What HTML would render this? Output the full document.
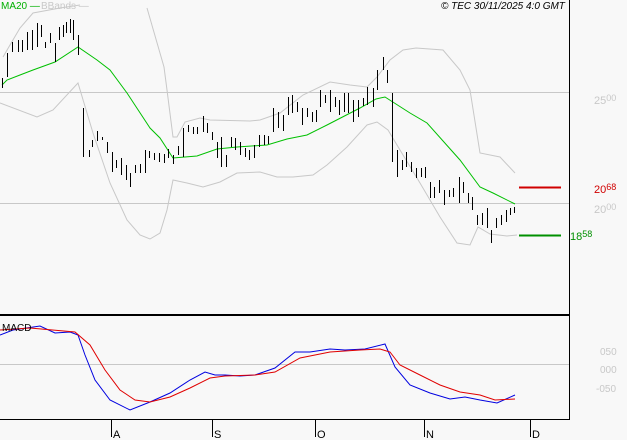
<!DOCTYPE html><html><head><style>body{margin:0;background:#f8f8f8;width:627px;height:440px;overflow:hidden;font-family:"Liberation Sans",sans-serif}</style></head><body>
<svg width="627" height="440" xmlns="http://www.w3.org/2000/svg" style="position:absolute;left:0;top:0">
<rect width="627" height="440" fill="#f8f8f8"/>
<g stroke="#c8c8c8" stroke-width="1" fill="none">
<line x1="0" y1="92.5" x2="569" y2="92.5"/><line x1="0" y1="203.5" x2="569" y2="203.5"/><line x1="0" y1="364.5" x2="569" y2="364.5"/>
<polyline points="3,57 10,45 20,28 33,13 60,8 80,5"/>
<polyline points="147,8 164,67 167,90 173,137 177,137 185,122 200,118 210,120 250,121 260,120 280,113 303,95 330,82 350,85 367,87 377,77 390,60 403,50 416,48 443,50 460,70 470,90 480,153 500,157 515,173"/>
<polyline points="0,103 37,117 53,110 78,83 93,133 110,183 127,220 140,235 150,239 160,233 167,210 173,180 187,183 203,187 220,182 237,173 260,172 277,177 293,177 313,175 327,165 347,147 367,125 377,122 388,130 400,150 420,183 440,217 457,243 470,245 478,227 490,234 507,236 517,235"/>
</g>
<polyline fill="none" stroke="#00c000" stroke-width="1" points="2,85 7,80 20,75 33,70 55,62 78,47 97,60 110,70 127,93 150,128 160,138 173,158 197,156 217,149 237,147 267,145 287,139 307,135 327,125 360,108 376,99 385,97 410,113 427,123 460,160 480,187 493,193 515,204"/>
<path stroke="#000" stroke-width="1" fill="none" shape-rendering="crispEdges" d="M2.5,78V88M7.5,53V77M12.5,42V52M18.5,40V52M22.5,40V52M27.5,32V50M32.5,30V50M37.5,23V47M41.5,25V37M45.5,42V48M50.5,33V43M55.5,43V62M59.5,27V40M63.5,25V37M66.5,22V33M70.5,19V33M73.5,20V40M78.5,35V55M83.5,108V157M89.5,150V157M92.5,140V147M97.5,131V141M102.5,137V140M107.5,142V153M112.5,152V172M116.5,160V168M121.5,158V175M126.5,165V180M130.5,173V187M135.5,165V173M140.5,164V173M145.5,150V173M149.5,151V158M154.5,153V160M159.5,153V162M164.5,154V163M168.5,149V158M173.5,155V164M178.5,146V155M183.5,128V157M188.5,125V132M193.5,127V134M197.5,127V134M203.5,116V132M207.5,123V133M212.5,132V140M217.5,142V158M221.5,137V167M226.5,155V167M231.5,137V147M235.5,138V150M240.5,142V155M245.5,148V157M249.5,150V160M254.5,145V158M259.5,135V147M264.5,135V145M268.5,136V144M273.5,108V132M278.5,112V128M283.5,115V131M288.5,97V115M292.5,95V113M297.5,102V112M302.5,108V125M307.5,108V117M312.5,112V122M316.5,110V122M320.5,90V107M325.5,95V103M330.5,90V112M335.5,97V107M339.5,100V115M344.5,93V112M348.5,93V113M353.5,100V122M358.5,100V117M363.5,98V106M367.5,87V105M373.5,88V107M377.5,70V90M383.5,57V70M387.5,70V83M392.5,93V162M397.5,150V177M402.5,160V170M406.5,152V167M411.5,162V172M416.5,168V178M421.5,168V177M425.5,167V178M430.5,182V198M434.5,187V198M439.5,180V193M444.5,190V205M449.5,190V197M453.5,188V197M459.5,177V203M463.5,182V193M468.5,193V203M472.5,197V210M477.5,215V225M482.5,213V225M487.5,208V228M491.5,230V243M496.5,218V228M501.5,215V225M506.5,210V222M510.5,208V215M514.5,207V213"/>
<line x1="519" y1="187.5" x2="561" y2="187.5" stroke="#d00000" stroke-width="2"/>
<line x1="519" y1="235.5" x2="561" y2="235.5" stroke="#009000" stroke-width="2"/>
<polyline fill="none" stroke="#0000e0" stroke-width="1" points="0,335 13,330 40,326 55,333 70,332 78,335 85,355 95,380 110,400 130,410 150,402 170,393 190,380 205,372 215,375 225,375 240,376 255,375 275,368 295,352 310,352 330,349 345,350 365,349 385,344 395,367 410,385 430,393 450,399 465,397 480,400 497,403 515,395"/>
<polyline fill="none" stroke="#e00000" stroke-width="1" points="0,330 30,328 75,332 90,345 105,370 120,390 135,400 150,402 170,397 190,388 210,378 225,376 255,375 275,372 300,358 330,352 360,350 380,349 390,352 400,365 420,375 440,385 460,392 480,395 495,400 515,399"/>
<line x1="569.5" y1="0" x2="569.5" y2="420" stroke="#000"/>
<line x1="0" y1="315" x2="570" y2="315" stroke="#000" stroke-width="2"/>
<line x1="0" y1="419.5" x2="570" y2="419.5" stroke="#000"/>
<g stroke="#000"><line x1="111.5" y1="419" x2="111.5" y2="437"/><line x1="212.5" y1="419" x2="212.5" y2="437"/><line x1="315.5" y1="419" x2="315.5" y2="437"/><line x1="424.5" y1="419" x2="424.5" y2="437"/><line x1="530.5" y1="419" x2="530.5" y2="437"/></g>
<g font-size="11" fill="#000"><text x="113" y="438">A</text><text x="214" y="438">S</text><text x="317" y="438">O</text><text x="426" y="438">N</text><text x="532" y="438">D</text></g>
<text x="2" y="331" font-size="10" fill="#000">MACD</text>
<text x="1" y="9" font-size="10" fill="#00b000">MA20 —</text>
<text x="41" y="9" font-size="10" fill="#c8c8c8">BBands —</text>
<text x="441" y="9" font-size="10" font-style="italic" fill="#000">© TEC 30/11/2025 4:0 GMT</text>
<g font-size="11" fill="#c8c8c8"><text x="594" y="104">25<tspan font-size="9" dy="-3">00</tspan></text><text x="594" y="213">20<tspan font-size="9" dy="-3">00</tspan></text>
<text x="600" y="355" font-size="10">050</text><text x="600" y="373" font-size="10">000</text><text x="596" y="392" font-size="10">-050</text></g>
<text x="594" y="193" font-size="11" fill="#d00000">20<tspan font-size="9" dy="-3">68</tspan></text>
<text x="570" y="240" font-size="11" fill="#009000">18<tspan font-size="9" dy="-3">58</tspan></text>
</svg></body></html>
